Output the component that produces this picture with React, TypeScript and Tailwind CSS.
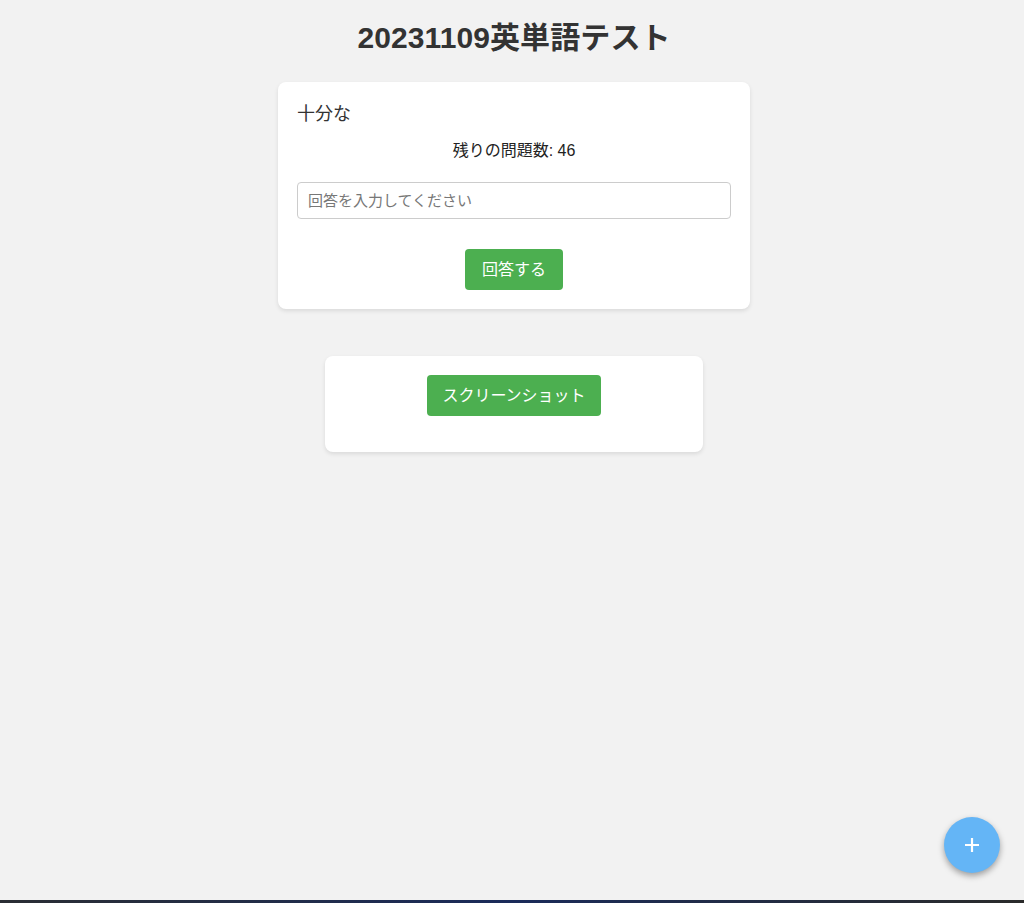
import React from "react";

export default function App() {
  return (
    <div
      className="relative w-full h-[903px] bg-[#f2f2f2] overflow-hidden flex flex-col items-center pl-[4px]"
      style={{ fontFamily: '"Liberation Sans", "Noto Sans CJK JP", sans-serif' }}
    >
      <h1 className="mt-[19px] text-[30px] leading-[37px] font-bold text-[#333] tracking-[0.1px]">
        20231109英単語テスト
      </h1>
      <div className="mt-[26px] w-[472px] bg-white rounded-[8px] shadow-[0_2px_4px_rgba(0,0,0,0.1)] px-[19px] pt-[20px] pb-[19px] flex flex-col">
        <div className="text-[18px] leading-[24px] text-[#333]">十分な</div>
        <div className="mt-[15px] text-center text-[16px] leading-[20px] text-[#222]">
          残りの問題数: 46
        </div>
        <input
          className="mt-[21px] h-[37px] w-full border border-[#ccc] rounded-[4px] px-[10px] text-[15px] outline-none placeholder:text-[#777]"
          placeholder="回答を入力してください"
        />
        <div className="mt-[30px] flex justify-center">
          <button className="w-[98px] h-[41px] bg-[#4caf50] text-white text-[16px] rounded-[4px]">
            回答する
          </button>
        </div>
      </div>
      <div className="mt-[47px] w-[378px] h-[96px] bg-white rounded-[8px] shadow-[0_2px_4px_rgba(0,0,0,0.1)] pt-[19px] flex justify-center items-start">
        <button className="w-[174px] h-[41px] bg-[#4caf50] text-white text-[16px] rounded-[4px]">
          スクリーンショット
        </button>
      </div>
      <button className="absolute left-[944px] top-[817px] w-[56px] h-[56px] rounded-full bg-[#64b5f6] shadow-[0_3px_6px_rgba(0,0,0,0.35)] flex items-center justify-center">
        <svg width="18" height="18" viewBox="0 0 18 18">
          <path d="M9 2v14M2 9h14" stroke="white" strokeWidth="2.2" />
        </svg>
      </button>
      <div className="absolute left-0 bottom-0 w-full h-[3px] bg-gradient-to-r from-[#2a2d33] via-[#1a2a5a] to-[#2a2a2a]" />
    </div>
  );
}
